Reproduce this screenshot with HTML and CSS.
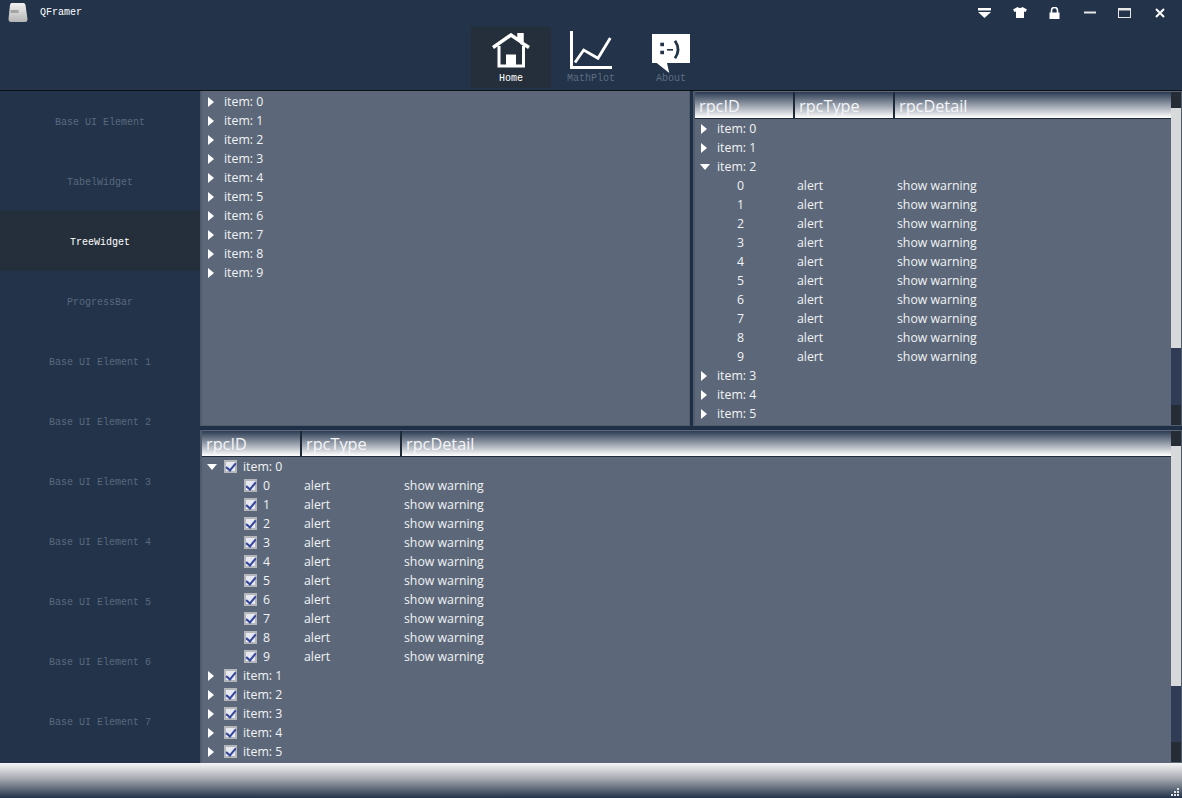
FILE: index.html
```html
<!DOCTYPE html>
<html lang="en">
<head>
  <meta charset="UTF-8">
  <meta name="viewport" content="width=device-width, initial-scale=1.0">
  <title>QFramer</title>
  <link rel="stylesheet" href="styles.css">
</head>
<body>
  <div class="window">
    <header class="titlebar">
      <div class="topline">
        <div class="brand">
          <svg class="logo" width="20" height="19" viewBox="0 0 20 19">
            <defs>
              <linearGradient id="keycap" x1="0" y1="0" x2="0" y2="1">
                <stop offset="0" stop-color="#f2f2f2"/>
                <stop offset="1" stop-color="#b4b4b4"/>
              </linearGradient>
            </defs>
            <path d="M3.500 0 L15.500 0 Q17 0 17.500 2 L19.500 16 Q19.500 19 17 19 L3 19 Q0.500 19 0.500 16 L2 2 Q2.500 0 3.500 0 Z" fill="url(#keycap)"/>
            <rect x="2.500" y="7" width="8" height="3" fill="#a4a4a4"/>
          </svg>
          <span class="app-name">QFramer</span>
        </div>
        <div class="win-buttons">
          <span class="win-btn">
            <svg width="13" height="10" viewBox="0 0 13 10"><rect x="0" y="0" width="13" height="2.500" fill="#fff"/><path d="M0 4 H13 L6.500 10 Z" fill="#fff"/></svg>
          </span>
          <span class="win-btn">
            <svg width="14" height="11" viewBox="0 0 14 11"><path d="M4.500 0 Q7 2 9.500 0 L14 2.500 L12.500 5 L11 4.500 V11 H3 V4.500 L1.500 5 L0 2.500 Z" fill="#fff"/></svg>
          </span>
          <span class="win-btn">
            <svg width="11" height="12" viewBox="0 0 11 12"><path d="M2.500 6 V3.500 A3 3 0 0 1 8.500 3.500 V6" fill="none" stroke="#fff" stroke-width="1.600"/><rect x="0.500" y="5.500" width="10" height="6.500" fill="#fff"/></svg>
          </span>
          <span class="win-btn">
            <svg width="12" height="3" viewBox="0 0 12 3"><rect x="0" y="0.500" width="12" height="2" fill="#e8e8e8"/></svg>
          </span>
          <span class="win-btn">
            <svg width="13" height="10" viewBox="0 0 13 10"><rect x="0.500" y="0.500" width="12" height="9" fill="none" stroke="#e8e8e8"/><rect x="0" y="0" width="13" height="2.500" fill="#e8e8e8"/></svg>
          </span>
          <span class="win-btn">
            <svg width="10" height="10" viewBox="0 0 10 10"><path d="M1 1 L9 9 M9 1 L1 9" stroke="#fff" stroke-width="2"/></svg>
          </span>
        </div>
      </div>
      <nav class="mainnav">
        <div class="nav-item active">
          <svg class="icon-home" width="38" height="35" viewBox="0 0 38 35">
            <path d="M1 14.500 L19 2 L27 7.500 V1 H30 V10 L37 14.500" fill="none" stroke="#fff" stroke-width="3.500"/>
            <path d="M7 13 V33 H31.500 V13" fill="none" stroke="#fff" stroke-width="3"/>
            <rect x="14" y="21.500" width="10" height="12" fill="#fff"/>
          </svg>
          <span>Home</span>
        </div>
        <div class="nav-item">
          <svg class="icon-plot" width="42" height="38" viewBox="0 0 42 38">
            <path d="M1.500 0 V36.500 H42" fill="none" stroke="#fff" stroke-width="3"/>
            <path d="M5 31.500 L13.700 19 L28 27.300 L40.300 7" fill="none" stroke="#fff" stroke-width="2.800"/>
          </svg>
          <span>MathPlot</span>
        </div>
        <div class="nav-item">
          <svg class="icon-about" width="38" height="39" viewBox="0 0 38 39">
            <path d="M0 0 H38 V29 H15 L17.300 39 L4.700 29 H0 Z" fill="#fff"/>
            <rect x="8.300" y="8.700" width="3.700" height="3.500" fill="#22334a"/>
            <rect x="8.300" y="16.700" width="3.700" height="3.500" fill="#22334a"/>
            <rect x="15" y="15" width="6" height="1.600" fill="#22334a"/>
            <path d="M23 6.700 Q29 15.500 23 24.300" fill="none" stroke="#22334a" stroke-width="2.800"/>
          </svg>
          <span>About</span>
        </div>
      </nav>
    </header>

    <div class="body">
      <aside class="sidebar">
        <div class="side-item">Base UI Element</div>
        <div class="side-item">TabelWidget</div>
        <div class="side-item active">TreeWidget</div>
        <div class="side-item">ProgressBar</div>
        <div class="side-item">Base UI Element 1</div>
        <div class="side-item">Base UI Element 2</div>
        <div class="side-item">Base UI Element 3</div>
        <div class="side-item">Base UI Element 4</div>
        <div class="side-item">Base UI Element 5</div>
        <div class="side-item">Base UI Element 6</div>
        <div class="side-item">Base UI Element 7</div>
      </aside>

      <main class="content">
        <div class="top-split">
          <section class="panel panel-plain">
            <div class="rows">
              <div class="row"><div class="cell"><i class="arrow"></i>item: 0</div></div>
              <div class="row"><div class="cell"><i class="arrow"></i>item: 1</div></div>
              <div class="row"><div class="cell"><i class="arrow"></i>item: 2</div></div>
              <div class="row"><div class="cell"><i class="arrow"></i>item: 3</div></div>
              <div class="row"><div class="cell"><i class="arrow"></i>item: 4</div></div>
              <div class="row"><div class="cell"><i class="arrow"></i>item: 5</div></div>
              <div class="row"><div class="cell"><i class="arrow"></i>item: 6</div></div>
              <div class="row"><div class="cell"><i class="arrow"></i>item: 7</div></div>
              <div class="row"><div class="cell"><i class="arrow"></i>item: 8</div></div>
              <div class="row"><div class="cell"><i class="arrow"></i>item: 9</div></div>
            </div>
          </section>

          <section class="panel panel-columns">
            <div class="tree">
              <div class="head">
                <div class="head-cell">rpcID</div>
                <div class="head-cell">rpcType</div>
                <div class="head-cell">rpcDetail</div>
              </div>
              <div class="rows">
                <div class="row"><div class="cell"><i class="arrow"></i>item: 0</div></div>
                <div class="row"><div class="cell"><i class="arrow"></i>item: 1</div></div>
                <div class="row"><div class="cell"><i class="arrow open"></i>item: 2</div></div>
                <div class="row"><div class="cell child">0</div><div class="col">alert</div><div class="col">show warning</div></div>
                <div class="row"><div class="cell child">1</div><div class="col">alert</div><div class="col">show warning</div></div>
                <div class="row"><div class="cell child">2</div><div class="col">alert</div><div class="col">show warning</div></div>
                <div class="row"><div class="cell child">3</div><div class="col">alert</div><div class="col">show warning</div></div>
                <div class="row"><div class="cell child">4</div><div class="col">alert</div><div class="col">show warning</div></div>
                <div class="row"><div class="cell child">5</div><div class="col">alert</div><div class="col">show warning</div></div>
                <div class="row"><div class="cell child">6</div><div class="col">alert</div><div class="col">show warning</div></div>
                <div class="row"><div class="cell child">7</div><div class="col">alert</div><div class="col">show warning</div></div>
                <div class="row"><div class="cell child">8</div><div class="col">alert</div><div class="col">show warning</div></div>
                <div class="row"><div class="cell child">9</div><div class="col">alert</div><div class="col">show warning</div></div>
                <div class="row"><div class="cell"><i class="arrow"></i>item: 3</div></div>
                <div class="row"><div class="cell"><i class="arrow"></i>item: 4</div></div>
                <div class="row"><div class="cell"><i class="arrow"></i>item: 5</div></div>
              </div>
            </div>
            <div class="scrollbar scroll-a">
              <div class="sb-end sb-up"></div>
              <div class="sb-handle"></div>
              <div class="sb-track"></div>
              <div class="sb-end sb-down"></div>
            </div>
          </section>
        </div>

        <section class="panel panel-columns panel-bottom">
          <div class="tree">
            <div class="head">
              <div class="head-cell">rpcID</div>
              <div class="head-cell">rpcType</div>
              <div class="head-cell">rpcDetail</div>
            </div>
            <div class="rows">
              <div class="row"><div class="cell"><i class="arrow open"></i><i class="check"></i>item: 0</div></div>
              <div class="row"><div class="cell child"><i class="check"></i>0</div><div class="col">alert</div><div class="col">show warning</div></div>
              <div class="row"><div class="cell child"><i class="check"></i>1</div><div class="col">alert</div><div class="col">show warning</div></div>
              <div class="row"><div class="cell child"><i class="check"></i>2</div><div class="col">alert</div><div class="col">show warning</div></div>
              <div class="row"><div class="cell child"><i class="check"></i>3</div><div class="col">alert</div><div class="col">show warning</div></div>
              <div class="row"><div class="cell child"><i class="check"></i>4</div><div class="col">alert</div><div class="col">show warning</div></div>
              <div class="row"><div class="cell child"><i class="check"></i>5</div><div class="col">alert</div><div class="col">show warning</div></div>
              <div class="row"><div class="cell child"><i class="check"></i>6</div><div class="col">alert</div><div class="col">show warning</div></div>
              <div class="row"><div class="cell child"><i class="check"></i>7</div><div class="col">alert</div><div class="col">show warning</div></div>
              <div class="row"><div class="cell child"><i class="check"></i>8</div><div class="col">alert</div><div class="col">show warning</div></div>
              <div class="row"><div class="cell child"><i class="check"></i>9</div><div class="col">alert</div><div class="col">show warning</div></div>
              <div class="row"><div class="cell"><i class="arrow"></i><i class="check"></i>item: 1</div></div>
              <div class="row"><div class="cell"><i class="arrow"></i><i class="check"></i>item: 2</div></div>
              <div class="row"><div class="cell"><i class="arrow"></i><i class="check"></i>item: 3</div></div>
              <div class="row"><div class="cell"><i class="arrow"></i><i class="check"></i>item: 4</div></div>
              <div class="row"><div class="cell"><i class="arrow"></i><i class="check"></i>item: 5</div></div>
            </div>
          </div>
          <div class="scrollbar scroll-b">
            <div class="sb-end sb-up"></div>
            <div class="sb-handle"></div>
            <div class="sb-track"></div>
            <div class="sb-end sb-down"></div>
          </div>
        </section>
      </main>
    </div>

    <footer class="statusbar">
      <svg width="9" height="9" viewBox="0 0 9 9" fill="#e4e6ea">
        <rect x="6" y="0" width="2" height="2"/>
        <rect x="3" y="3" width="2" height="2"/><rect x="6" y="3" width="2" height="2"/>
        <rect x="0" y="6" width="2" height="2"/><rect x="3" y="6" width="2" height="2"/><rect x="6" y="6" width="2" height="2"/>
      </svg>
    </footer>
  </div>
</body>
</html>
```

FILE: styles.css
```css
* {
  box-sizing: border-box;
}
html, body {
  margin: 0;
  padding: 0;
  background: #22334a;
}
.window {
  width: 1182px;
  height: 798px;
  display: flex;
  flex-direction: column;
  overflow: hidden;
  font-family: "Open Sans", "Noto Sans", sans-serif;
  color: #f1f3f5;
}

/* title bar */
.titlebar {
  height: 91px;
  background: #22334a;
  border-bottom: 1px solid #0b0f16;
}
.topline {
  height: 27px;
  display: flex;
  justify-content: space-between;
  align-items: flex-start;
}
.brand {
  display: flex;
  align-items: center;
  padding: 3px 0 0 8px;
}
.logo {
  margin-right: 12px;
}
.app-name {
  font-family: "Liberation Mono", monospace;
  font-size: 10px;
  color: #fff;
}
.win-buttons {
  display: flex;
  padding-right: 5px;
}
.win-btn {
  width: 35px;
  height: 25px;
  display: flex;
  align-items: center;
  justify-content: center;
}
.mainnav {
  display: flex;
  justify-content: center;
}
.nav-item {
  width: 80px;
  height: 61px;
  display: flex;
  flex-direction: column;
  align-items: center;
  padding-bottom: 4px;
  font-family: "Liberation Mono", monospace;
  font-size: 10px;
  color: #5f6e82;
}
.nav-item span {
  margin-top: auto;
}
.nav-item.active {
  background: #252f3c;
  color: #fff;
}
.icon-home {
  margin-top: 6px;
}
.icon-plot {
  margin-top: 4px;
}
.icon-about {
  margin-top: 7px;
}

/* sidebar */
.body {
  flex: 1;
  display: flex;
  min-height: 0;
}
.sidebar {
  width: 200px;
  overflow: hidden;
}
.side-item {
  height: 60px;
  display: flex;
  align-items: center;
  justify-content: center;
  padding-top: 2px;
  font-family: "Liberation Mono", monospace;
  font-size: 10px;
  color: #5a697e;
}
.side-item.active {
  background: #252f3c;
  color: #fff;
}

/* tree panels */
.content {
  flex: 1;
  display: flex;
  flex-direction: column;
  gap: 4px;
  background: #1f3046;
}
.top-split {
  height: 335px;
  display: flex;
  gap: 3px;
}
.panel {
  background: #5c6879;
  border: 1px solid #505c6c;
  border-left-width: 2px;
  border-top: 0;
}
.panel-plain {
  width: 490px;
  padding-top: 1px;
}
.panel-columns {
  flex: 1;
  display: flex;
  padding-top: 1px;
  min-width: 0;
}
.panel-bottom {
  height: 333px;
  flex: none;
  border-bottom: 0;
}
.panel-bottom .head {
  height: 26px;
}
.panel-bottom .head-cell {
  padding-top: 0;
}
.tree {
  flex: 1;
  min-width: 0;
}
.head {
  height: 27px;
  display: grid;
  grid-template-columns: 100px 100px 1fr;
  border-bottom: 1px solid #1f2a38;
}
.head-cell {
  display: flex;
  align-items: center;
  padding: 1px 0 0 4px;
  font-size: 16.3px;
  color: #f4f5f7;
  border-right: 2px solid #1f2a38;
  background: linear-gradient(to bottom, #2c3c54 0%, #ffffff 100%);
}
.head-cell:last-child {
  border-right: 0;
}
.row {
  height: 19px;
  display: grid;
  grid-template-columns: 100px 100px 1fr;
  align-items: center;
  font-size: 12.3px;
  white-space: nowrap;
}
.cell {
  display: flex;
  align-items: center;
  padding-left: 5px;
}
.cell.child {
  padding-left: 42px;
}
.col {
  padding-left: 2px;
}

/* expand arrows */
.arrow {
  width: 10px;
  height: 10px;
  margin-right: 7px;
  padding-left: 1px;
  flex: none;
  display: flex;
  align-items: center;
}
.arrow::before {
  content: "";
  border-left: 6px solid #fff;
  border-top: 5px solid transparent;
  border-bottom: 5px solid transparent;
}
.arrow.open {
  padding-left: 0;
}
.arrow.open::before {
  border-left: 5px solid transparent;
  border-right: 5px solid transparent;
  border-top: 6px solid #fff;
  border-bottom: 0;
}

/* checkboxes */
.check {
  position: relative;
  width: 13px;
  height: 13px;
  margin-right: 6px;
  flex: none;
  background: #e6e9f2;
  border: 2px solid #b4b6ba;
}
.check::after {
  content: "";
  position: absolute;
  left: 2px;
  top: -1px;
  width: 4px;
  height: 8px;
  border-right: 2px solid #33459a;
  border-bottom: 2px solid #33459a;
  transform: rotate(40deg);
}

/* scrollbars */
.scrollbar {
  width: 10px;
  flex: none;
  display: flex;
  flex-direction: column;
}
.sb-end {
  background: #262c36;
}
.sb-handle {
  background: #d8d9db;
}
.sb-track {
  background: #303b55;
}
.scroll-a .sb-up { height: 16px; }
.scroll-a .sb-handle { height: 240px; }
.scroll-a .sb-track { height: 57px; }
.scroll-a .sb-down { height: 20px; }
.scroll-b .sb-up { height: 15px; }
.scroll-b .sb-handle { height: 240px; }
.scroll-b .sb-track { height: 56px; }
.scroll-b .sb-down { height: 20px; }

/* bottom bar */
.statusbar {
  height: 35px;
  display: flex;
  justify-content: flex-end;
  align-items: flex-end;
  padding: 0 2px 1px 0;
  background: linear-gradient(to bottom, #f6f6f7 0%, #a5a9b0 45%, #22334a 100%);
}
```
